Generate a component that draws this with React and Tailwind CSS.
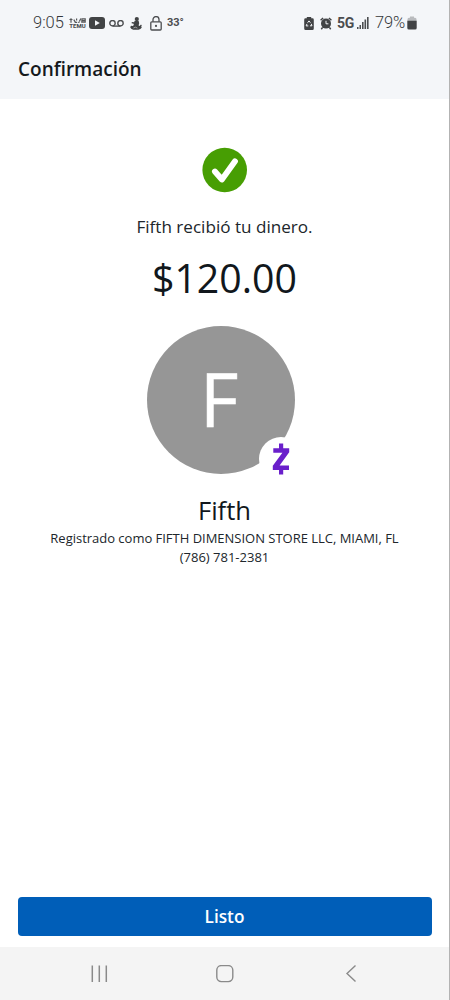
import React from 'react'

const TemuIcon = () => (
  <div className="flex w-[17px] flex-col items-center">
    <svg className="h-[5px] w-[17px]" viewBox="0 0 17 5" fill="none" stroke="#555759" strokeWidth="1.2">
      <path d="M.5 1.5h3M2 .2v4.500M4.800 1.600l1.600 2.800M7.600.4v2M5.600 4.400h2.600M9.200 4.400h1.300M10.400 3.600L11.800.6M13 .8h3.200v3.400h-3.400zM12.800 2.600h3.800" />
    </svg>
    <span className="text-[6px] leading-[6px] font-extrabold">TEMU</span>
  </div>
)

const YoutubeIcon = () => (
  <svg className="h-3 w-4" viewBox="0 0 16 12">
    <rect width="16" height="12" rx="3" fill="#414345" />
    <path d="M6 3.3v5.4L10.8 6z" fill="#f4f6f9" />
  </svg>
)

const VoicemailIcon = () => (
  <svg className="h-[7px] w-[15px]" viewBox="0 0 15 7" fill="none" stroke="#4b4d50" strokeWidth="1.4">
    <circle cx="3.5" cy="3.2" r="2.7" />
    <circle cx="11.5" cy="3.2" r="2.7" />
    <path d="M3.5 6.1h8" />
  </svg>
)

const FigureIcon = () => (
  <svg className="h-[13px] w-3" viewBox="0 0 12 13" fill="#414345">
    <circle cx="6.8" cy="2.1" r="2.1" />
    <path d="M4.600 3.800h4l.6 2.400-.6 2.200 1 .6 1.400-1.400.8.800-.6 1.200.6.900-1.400 1.500-2 .8H3.200L1.200 11.800.2 10.200l.8-1.500 2 .3.8-1.200-.2-1-2-.6.2-1.200 2.400.2z" />
    <path d="M3.4 11l2.200-.8 1.800 1" stroke="#f4f6f9" strokeWidth=".5" fill="none" />
  </svg>
)

const LockIcon = () => (
  <svg className="h-[15px] w-3" viewBox="0 0 12 15" fill="none" stroke="#4b4d50" strokeWidth="1.3">
    <rect x=".8" y="5.8" width="10.4" height="8.2" rx="1" />
    <path d="M3 5.800V3.600a3 3 0 0 1 6 0v2.200" />
    <circle cx="6" cy="9.9" r="1.1" fill="#4b4d50" stroke="none" />
  </svg>
)

const BatterySaverIcon = () => (
  <svg className="h-[13px] w-[10px]" viewBox="0 0 10 13">
    <path d="M2.800 0h4.400v1.300h1.200q1.400 0 1.400 1.400v8.800Q9.800 13 8.400 13H1.600Q.2 13 .2 11.500V2.700Q.2 1.300 1.600 1.300h1.200z" fill="#414345" />
    <path d="M3.600 5.700L5 3.900l1.400 1.800M7.200 6.800l.8 2H6M4.300 8.900H2.100l.9-2" fill="none" stroke="#f4f6f9" strokeWidth="1" />
  </svg>
)

const AlarmIcon = () => (
  <svg className="h-[13px] w-3" viewBox="0 0 12 13">
    <circle cx="6" cy="6.6" r="5" fill="#414345" />
    <path d="M.6 3.300L3.100 1M11.400 3.300L8.900 1M2.600 10.400L1.300 12.200M9.400 10.400l1.300 1.800" stroke="#414345" strokeWidth="1.5" fill="none" />
    <path d="M6 3.800v3h2.400" stroke="#f4f6f9" strokeWidth="1" fill="none" />
  </svg>
)

const SignalIcon = () => (
  <svg className="h-3 w-3" viewBox="0 0 12 12" fill="#4b4d50">
    <rect x="0" y="10" width="1.5" height="2" />
    <rect x="2.5" y="8" width="1.5" height="4" />
    <rect x="5" y="5" width="1.6" height="7" />
    <rect x="7.5" y="2.5" width="1.6" height="9.5" />
    <rect x="10" y="0" width="1.6" height="12" />
  </svg>
)

const BatteryIcon = () => (
  <svg className="h-[14px] w-[10px]" viewBox="0 0 10 14">
    <path d="M3 .5h4v1.300h1q1.500 0 1.500 1.500V5H.5V3.300Q.5 1.800 2 1.800h1z" fill="#b9bbbe" />
    <path d="M.3 4.800h9.400v7.200q0 1.500-1.500 1.500H1.800Q.3 13.500.3 12z" fill="#414345" />
  </svg>
)

const StatusBar = () => (
  <div className="flex h-[46px] items-center justify-between pr-8 pl-[33px] font-['Roboto',sans-serif] text-[#4b4d50]">
    <div className="flex items-center">
      <span className="w-[36px] pt-px text-[16.5px] font-light text-[#34363a]">9:05</span>
      <TemuIcon />
      <span className="ml-[3px]"><YoutubeIcon /></span>
      <span className="ml-[4px]"><VoicemailIcon /></span>
      <span className="ml-[6px]"><FigureIcon /></span>
      <span className="ml-[8px]"><LockIcon /></span>
      <span className="ml-[5px] pt-px text-[11px] font-bold">33°</span>
    </div>
    <div className="flex items-center">
      <BatterySaverIcon />
      <span className="ml-[6px]"><AlarmIcon /></span>
      <span className="ml-[5px] w-[20px] text-[14px] font-bold tracking-[-0.4px]">5G</span>
      <SignalIcon />
      <span className="ml-[6px] w-[32px] pt-px text-[16.5px] font-light tracking-[-0.2px] text-[#34363a]">79%</span>
      <BatteryIcon />
    </div>
  </div>
)

const CheckBadge = () => (
  <svg className="h-[46px] w-[46px]" viewBox="0 0 46 46">
    <circle cx="22.7" cy="23" r="22.3" fill="#479e03" />
    <path d="M12.900 24.500l7 8L33 14.300" fill="none" stroke="#fff" strokeWidth="5.8" strokeLinecap="round" strokeLinejoin="round" />
  </svg>
)

const ZelleBadge = () => (
  <div className="absolute top-[111px] left-[112px] flex h-[44px] w-[44px] items-center justify-center rounded-full bg-white">
    <svg className="h-[32px] w-[18px]" viewBox="0 0 18 32" fill="#6a1fcb">
      <path d="M7 .5h4.200v4.700h6v4.100L7.600 22.400H17v4.600h-5.800v4.500H7V27H.8v-4.200L10.400 9.800H1.300V5.200H7z" />
    </svg>
  </div>
)

const NavBar = () => (
  <div className="flex h-[53px] items-center justify-between bg-[#f4f4f4] pr-[89px] pl-[90px]">
    <svg className="h-[18px] w-[18px]" viewBox="0 0 18 18" stroke="#8a8a8a" strokeWidth="1.5">
      <path d="M2.300.5v16.500M9.300.5v16.500M16.300.5v16.500" />
    </svg>
    <svg className="h-[18px] w-[18px]" viewBox="0 0 18 18" fill="none" stroke="#8a8a8a" strokeWidth="1.4">
      <rect x=".8" y=".6" width="16" height="16" rx="4.5" />
    </svg>
    <svg className="h-[18px] w-[18px]" viewBox="0 0 18 18" fill="none" stroke="#8a8a8a" strokeWidth="1.4">
      <path d="M13.500.6L5 8.600l8.500 8" />
    </svg>
  </div>
)

export default function App() {
  return (
    <div className="flex h-[1000px] w-[450px] flex-col border-r border-[#b3b3b3] bg-white font-['Open_Sans',sans-serif] text-[#20262b]">
      <header className="h-[99px] bg-[#f4f6f9]">
        <StatusBar />
        <h1 className="pl-[18px] text-[19px] leading-[46px] font-semibold text-[#15191d]">Confirmación</h1>
      </header>

      <main className="flex flex-1 flex-col items-center pt-12">
        <CheckBadge />
        <p className="mt-[22px] text-[17.1px] leading-6">Fifth recibió tu dinero.</p>
        <p className="mt-[14px] text-[39.3px] leading-[50px] text-[#11171c]">$120.00</p>
        <div className="relative mt-[23px] mr-[7px] flex h-[148px] w-[148px] items-center justify-center rounded-full bg-[#969696]">
          <span className="pr-[4px] pb-[4px] text-[75px] leading-none text-white [-webkit-text-stroke:0.5px_white]">F</span>
          <ZelleBadge />
        </div>
        <h2 className="mt-[20px] text-[25.6px] leading-[34px] text-[#11171c]">Fifth</h2>
        <p className="mt-px text-[13px] leading-[19px] tracking-[-0.015px] whitespace-nowrap">
          Registrado como FIFTH DIMENSION STORE LLC, MIAMI, FL
        </p>
        <p className="text-[13px] leading-[19px]">(786) 781-2381</p>
      </main>

      <div className="px-[17.5px] pb-[11px]">
        <button className="h-[39px] w-full rounded-[4px] bg-[#005eb8] text-[17.2px] font-semibold text-white">Listo</button>
      </div>
      <NavBar />
    </div>
  )
}
